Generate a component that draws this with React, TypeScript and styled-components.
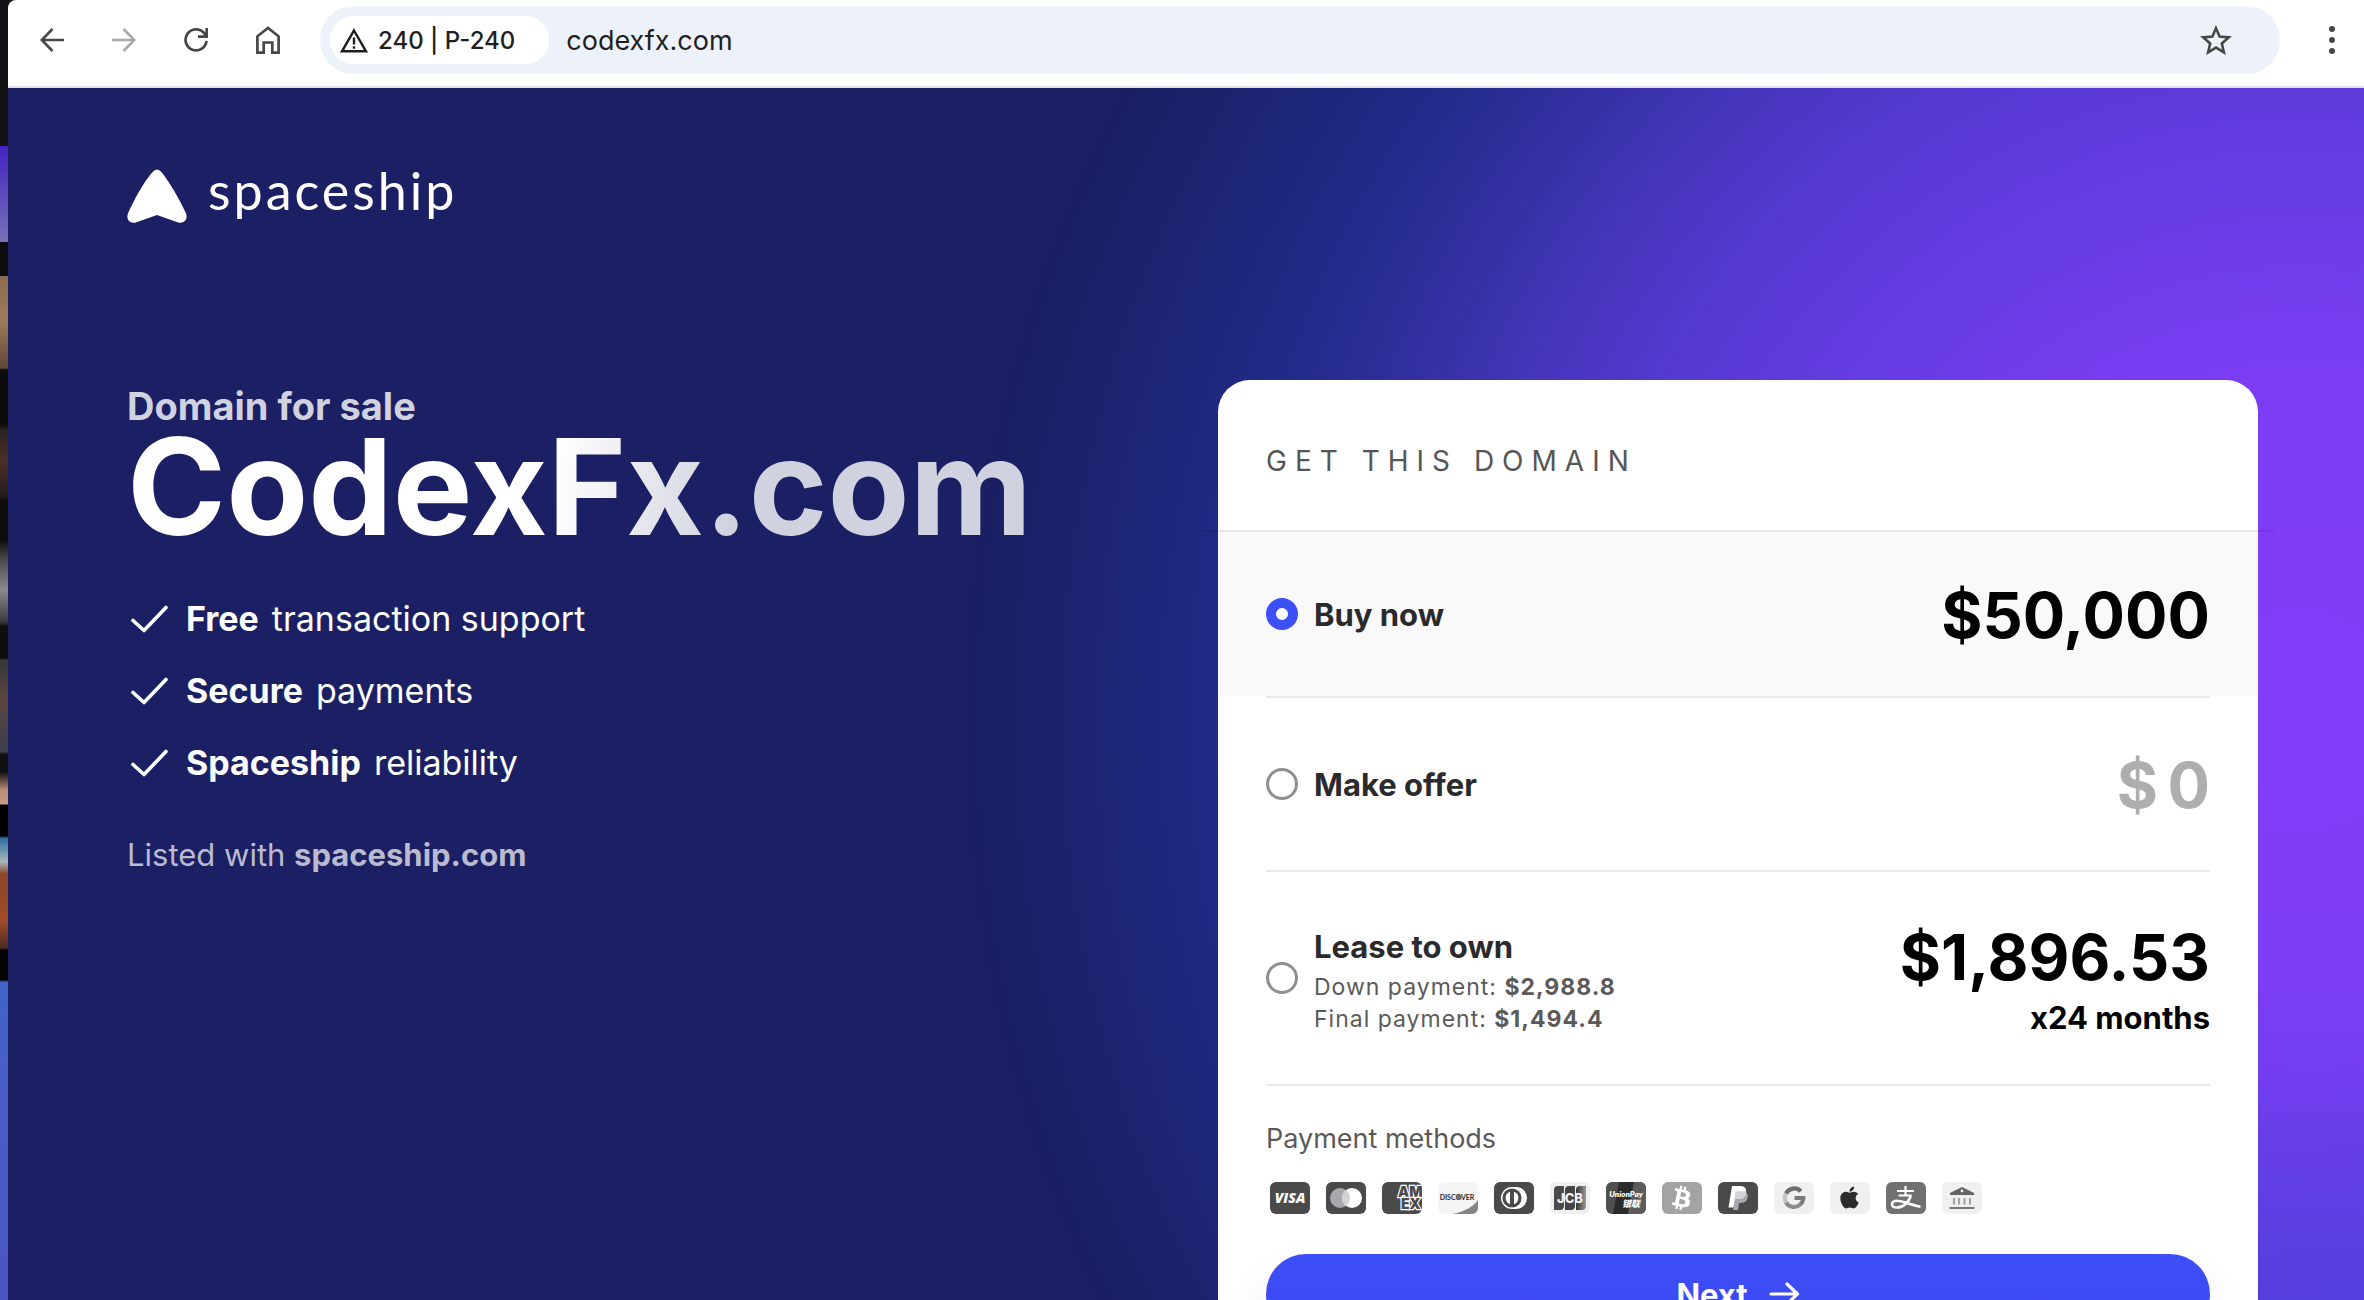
import React, { useState } from "react";
import styled, { createGlobalStyle } from "styled-components";
import { FaApple, FaBtc } from "react-icons/fa";

const GlobalStyle = createGlobalStyle`
  *, *::before, *::after { box-sizing: border-box; }
  body {
    margin: 0;
    font-family: Inter, "Liberation Sans", "Noto Sans CJK SC", sans-serif;
    -webkit-font-smoothing: antialiased;
  }
  button, input { font: inherit; }
`;

const Desktop = styled.div`
  display: grid;
  grid-template-columns: 8px minmax(0, 1fr);
  height: 100vh;
  overflow: hidden;
  background: #101010;
`;

const Backdrop = styled.aside`
  background: linear-gradient(
    180deg,
    #121214 0 146px, #4522c4 146px, #7672b6 242px,
    #0d0d0d 242px 276px, #8a6a4e 276px, #a07a5c 320px, #5f4636 368px,
    #0c0c0c 370px 424px, #2a211f 430px, #4a3026 460px, #251c1a 496px,
    #0d0d0d 500px 540px, #4a4a4c 560px, #8b8b8d 590px, #3a3a3c 622px,
    #0e0e0e 626px 658px, #353638 660px, #5a4640 700px, #3a3f4c 752px,
    #101010 754px 772px, #b98d76 790px, #c99c84 804px,
    #000000 805px 836px, #2b6f9f 838px, #a8b6b8 862px, #8c4526 874px, #a24c27 920px, #4c2c22 948px,
    #050505 950px 980px, #3f63c4 982px, #4a5cc6 1100px, #4a56c0 1300px
  );
`;

const BrowserWindow = styled.div`
  display: flex;
  flex-direction: column;
  min-width: 0;
  min-height: 0;
  border-top-left-radius: 8px;
  overflow: hidden;
`;

const Toolbar = styled.header`
  flex: none;
  display: flex;
  align-items: center;
  gap: 28px;
  padding: 6px 8px 12px 20px;
  background: #ffffff;
  border-bottom: 2px solid #dfe2e0;
  color: #474747;
`;

const NavButtons = styled.nav`
  display: flex;
  gap: 24px;
`;

const IconButton = styled.button<{ $muted?: boolean }>`
  display: grid;
  place-items: center;
  width: 48px;
  height: 48px;
  padding: 0;
  border: 0;
  background: none;
  color: ${(p) => (p.$muted ? "#a9a9a9" : "#474747")};
`;

const AddressBar = styled.div`
  flex: 1;
  display: flex;
  align-items: center;
  gap: 17px;
  height: 68px;
  padding: 0 40px 0 10px;
  border-radius: 34px;
  background: #edf2fa;
`;

const SiteChip = styled.button`
  display: flex;
  align-items: center;
  gap: 10px;
  height: 48px;
  padding: 0 34px 0 10px;
  border: 0;
  border-radius: 24px;
  background: #ffffff;
  color: #1f1f1f;
  font-size: 24px;
  font-weight: 500;
  white-space: nowrap;
`;

const UrlInput = styled.input`
  flex: 1;
  min-width: 0;
  padding: 0;
  border: 0;
  outline: 0;
  background: none;
  color: #1f1f1f;
  font-size: 27px;
`;

const Page = styled.main`
  flex: 1;
  min-height: 0;
  overflow: hidden;
  padding: 81px 106px 0 119px;
  background:
    radial-gradient(ellipse 800px 420px at 100% 108%, rgba(62, 66, 220, 0.55), rgba(62, 66, 220, 0)),
    radial-gradient(
      circle 1340px at calc(100% - 64px) 632px,
      #833df9 0%,
      #7a3df2 26%,
      #683ce5 39%,
      #5739d3 52%,
      #4636bc 62%,
      #222b8a 79%,
      #192063 98%,
      #1b1f63 100%
    );
`;

const BrandLink = styled.a`
  display: flex;
  align-items: flex-start;
  gap: 21px;
  width: max-content;
  height: 56px;
  color: #ffffff;
  text-decoration: none;
`;

const BrandName = styled.span`
  font-family: Lato, "Open Sans", sans-serif;
  font-size: 52px;
  font-weight: 400;
  line-height: 42px;
  letter-spacing: 3px;
`;

const Hero = styled.div`
  display: grid;
  grid-template-columns: repeat(2, minmax(0, 1fr));
  gap: 51px;
  align-items: start;
  margin-top: 155px;
`;

const Pitch = styled.section`
  padding-top: 2px;
  color: #ffffff;
`;

const Eyebrow = styled.p`
  margin: 0;
  color: #d1d2e0;
  font-size: 38px;
  font-weight: 700;
  line-height: 48px;
`;

const DomainName = styled.h1`
  width: max-content;
  margin: 0;
  background: linear-gradient(95deg, #ffffff 47%, #d0d2df 67%);
  background-clip: text;
  -webkit-background-clip: text;
  color: transparent;
  font-size: 134px;
  font-weight: 700;
  line-height: 112px;
`;

const Benefits = styled.ul`
  display: flex;
  flex-direction: column;
  gap: 32px;
  margin: 57px 0 0;
  padding: 0;
  list-style: none;
`;

const Benefit = styled.li`
  display: flex;
  align-items: center;
  gap: 13px;
  font-size: 34px;
  line-height: 40px;
  svg { margin: 0 3px; }
`;

const Strong = styled.strong`
  font-weight: 700;
`;

const Listing = styled.p`
  margin: 52px 0 0;
  color: #babbd0;
  font-size: 31px;
  line-height: 40px;
`;

const ListingLink = styled.a`
  color: inherit;
  font-weight: 700;
  text-decoration: none;
`;

const Card = styled.form`
  border-radius: 32px;
  background: #ffffff;
  color: #000000;
`;

const CardTitle = styled.h2`
  margin: 0;
  padding: 64px 48px 52px;
  color: #555555;
  font-size: 28px;
  font-weight: 400;
  line-height: 34px;
  letter-spacing: 8px;
  text-transform: uppercase;
`;

const Rule = styled.hr<{ $inset?: boolean }>`
  height: 2px;
  margin: ${(p) => (p.$inset ? "0 48px" : "0 -16px")};
  border: 0;
  background: rgba(0, 0, 0, 0.09);
`;

const Option = styled.div<{ $selected: boolean; $pad: number }>`
  display: flex;
  align-items: center;
  justify-content: space-between;
  padding: ${(p) => p.$pad}px 48px;
  background: ${(p) => (p.$selected ? "#f9f9f9" : "#ffffff")};
`;

const Choice = styled.label`
  display: flex;
  align-items: center;
  gap: 16px;
  color: #2a2a2c;
`;

const Radio = styled.input`
  appearance: none;
  flex: none;
  width: 32px;
  height: 32px;
  margin: 0;
  border: 3px solid #8f8f8f;
  border-radius: 50%;
  background: #ffffff;
  &:checked { border: 10px solid #3d4ff7; }
`;

const ChoiceText = styled.span`
  display: flex;
  flex-direction: column;
`;

const ChoiceName = styled.span`
  padding-top: 2px;
  font-size: 31px;
  font-weight: 700;
  line-height: 48px;
`;

const Detail = styled.span`
  color: #5a5a5a;
  font-size: 23px;
  line-height: 32px;
  letter-spacing: 1px;
`;

const PriceBlock = styled.div`
  display: flex;
  flex-direction: column;
  align-items: flex-end;
`;

const Price = styled.span`
  padding-top: 2px;
  font-size: 63px;
  font-weight: 700;
  line-height: 78px;
`;

const Term = styled.span`
  font-size: 31px;
  font-weight: 700;
  line-height: 44px;
`;

const OfferField = styled.label`
  display: flex;
  align-items: center;
  gap: 8px;
  padding-top: 2px;
  color: #aeaeae;
  font-size: 63px;
  font-weight: 700;
  line-height: 78px;
`;

const OfferInput = styled.input`
  width: 44px;
  height: 78px;
  padding: 0;
  border: 0;
  outline: 0;
  background: none;
  color: #000000;
  text-align: right;
  &::placeholder { color: #aeaeae; opacity: 1; }
`;

const Checkout = styled.div`
  padding: 36px 48px 48px;
`;

const MethodsTitle = styled.h3`
  margin: 0;
  color: #5a5a5a;
  font-size: 27px;
  font-weight: 400;
  line-height: 34px;
`;

const Methods = styled.ul`
  display: flex;
  flex-wrap: wrap;
  gap: 16px;
  margin: 26px 4px 40px;
  padding: 0;
  list-style: none;
`;

const Method = styled.li<{ $bg: string }>`
  display: grid;
  width: 40px;
  height: 32px;
  border-radius: 6px;
  overflow: hidden;
  background: ${(p) => p.$bg};
`;

const NextButton = styled.button`
  display: flex;
  align-items: center;
  justify-content: center;
  gap: 20px;
  width: 100%;
  height: 80px;
  border: 0;
  border-radius: 40px;
  background: linear-gradient(180deg, #3d4ff7, #3c46f0);
  box-shadow: 0 24px 48px rgba(0, 0, 0, 0.08);
  color: #ffffff;
  font-size: 31px;
  font-weight: 700;
`;

const Art = ({ children }: { children: React.ReactNode }) => (
  <svg width="40" height="32" viewBox="0 0 40 32" aria-hidden="true">{children}</svg>
);

const methods: { name: string; bg: string; art: React.ReactNode }[] = [
  {
    name: "Visa", bg: "#4a4a4a",
    art: <text x="20" y="21" fill="#fff" fontSize="14" fontWeight="800" fontStyle="italic" textAnchor="middle" fontFamily="Open Sans, sans-serif">VISA</text>,
  },
  {
    name: "Mastercard", bg: "#4a4a4a",
    art: <>
      <circle cx="14" cy="16" r="10" fill="#a7a7ac" />
      <circle cx="26" cy="16" r="10" fill="#fff" />
      <path d="M20 8a10 10 0 0 1 0 16a10 10 0 0 1 0-16z" fill="#d2d2d4" />
    </>,
  },
  {
    name: "American Express", bg: "#4a4a4a",
    art: <g fill="#4a4a4a" stroke="#fff" strokeWidth="2.4" paintOrder="stroke" fontSize="14" fontWeight="900" fontFamily="Inter, sans-serif">
      <text x="16" y="15">AM</text>
      <text x="19" y="27">EX</text>
    </g>,
  },
  {
    name: "Discover", bg: "#f5f5f5",
    art: <>
      <path d="M15 32C28 29 36 24 40 18V32z" fill="#858585" />
      <text x="19" y="18" fill="#2c2c2c" fontSize="7" fontWeight="700" textAnchor="middle" fontFamily="Lato, sans-serif">DISCOVER</text>
      <circle cx="21" cy="15.5" r="2.6" fill="#6d6d6d" />
    </>,
  },
  {
    name: "Diners Club", bg: "#4a4a4a",
    art: <>
      <path d="M18 5h4a11 11 0 0 1 0 22h-4z" fill="#fff" />
      <circle cx="18" cy="16" r="11" fill="#fff" />
      <circle cx="18" cy="16" r="9.6" fill="#4a4a4a" />
      <path d="M16 9.800a6.600 6.600 0 0 0 0 12.400zM20 9.800a6.600 6.600 0 0 1 0 12.400z" fill="#fff" />
    </>,
  },
  {
    name: "JCB", bg: "#f0f0f0",
    art: <>
      <defs>
        <linearGradient id="jcb"><stop offset="0" stopColor="#333" /><stop offset="1" stopColor="#999" /></linearGradient>
      </defs>
      <path d="M4 8q0-4 4-4h6v20q0 4-4 4H4z" fill="#4a4a4a" />
      <path d="M15 8q0-4 4-4h6v20q0 4-4 4h-6z" fill="#444" />
      <path d="M26 8q0-4 4-4h6v20q0 4-4 4h-6z" fill="url(#jcb)" />
      <text x="20" y="20.500" fill="#f0f0f0" fontSize="13" fontWeight="800" textAnchor="middle" fontFamily="Inter, sans-serif">JCB</text>
    </>,
  },
  {
    name: "UnionPay", bg: "#4f4f4f",
    art: <>
      <path d="M13 0h15l-6 32H7z" fill="#2b2b2b" />
      <path d="M28 0h12v32H22z" fill="#5c5c5c" />
      <text x="20" y="15" fill="#fff" fontSize="8" fontWeight="800" fontStyle="italic" textAnchor="middle" fontFamily="Lato, sans-serif">UnionPay</text>
      <text x="25" y="24.500" fill="#fff" fontSize="9" fontWeight="900" fontStyle="italic" textAnchor="middle" fontFamily="Noto Sans CJK SC, sans-serif">银联</text>
    </>,
  },
  {
    name: "Bitcoin", bg: "#a3a3a3",
    art: <g transform="rotate(12 20 16)"><FaBtc x={8} y={4} size={24} color="#fff" /></g>,
  },
  {
    name: "PayPal", bg: "#4a4a4a",
    art: <>
      <path d="M18.500 9h8q4 2 3.200 6.500Q28.500 21 22.500 21h-1.500l-1 7h-5z" fill="#a5a8ae" />
      <path d="M14 4h8.500q6.500 0 5.500 6.500Q27 17 20.500 17H17l-1.500 8.500H10.500z" fill="#fff" />
      <path d="M17.500 9.200h10.600q-.1 7.800-7.600 7.800H16.300z" fill="#d3d4d8" />
    </>,
  },
  {
    name: "Google Pay", bg: "#f0f0f0",
    art: <g fill="none" strokeWidth="4.200">
      <path d="M26.800 9.300A9.200 9.200 0 0 0 12 11.500" stroke="#6e6e6e" />
      <path d="M12 11.500a9.200 9.200 0 0 0 0 9" stroke="#c4c4c4" />
      <path d="M12 20.500a9.200 9.200 0 0 0 14.200 2" stroke="#8c8c8c" />
      <path d="M20.500 16h8.800a9.200 9.200 0 0 1-3.100 6.500" stroke="#7c7c7c" />
    </g>,
  },
  {
    name: "Apple Pay", bg: "#f0f0f0",
    art: <FaApple x={7} y={3} size={25} color="#2b2b2b" />,
  },
  {
    name: "Alipay", bg: "#717171",
    art: <g fill="none" stroke="#fff">
      <path d="M11 9h17M19.500 4v9M12.500 13.500h13" strokeWidth="2.200" />
      <path d="M25 13.500C23 20 17 25.500 11 25.500c-3.200 0-5-1.400-5-3.300 0-2 2-3.500 4.800-3.500 6 0 13.700 4 23.700 6" strokeWidth="2.600" />
    </g>,
  },
  {
    name: "Bank transfer", bg: "#f0f0f0",
    art: <>
      <path d="M20 5 32 11v2H8v-2z" fill="#666" />
      <circle cx="20" cy="9" r="1.400" fill="#f0f0f0" />
      <path d="M12 16v6.500M17 16v6.500M22.500 16v6.500M28 16v6.500" stroke="#999" strokeWidth="1.800" />
      <path d="M7.500 26h25" stroke="#777" strokeWidth="2" />
    </>,
  },
];

const benefits = [
  ["Free", "transaction support"],
  ["Secure", "payments"],
  ["Spaceship", "reliability"],
];

type Choices = "buy" | "offer" | "lease";

export default function App() {
  const [choice, setChoice] = useState<Choices>("buy");
  const radio = (value: Choices) => (
    <Radio type="radio" name="purchase" value={value} checked={choice === value} onChange={() => setChoice(value)} />
  );

  return (
    <>
      <GlobalStyle />
      <Desktop>
        <Backdrop />
        <BrowserWindow>
          <Toolbar>
            <NavButtons>
              <IconButton type="button" aria-label="Back">
                <svg width="24" height="24" viewBox="0 0 24 24" fill="none" stroke="currentColor" strokeWidth="2.600"><path d="M24 12H2M12.500 1 1.700 12l10.800 11" /></svg>
              </IconButton>
              <IconButton type="button" aria-label="Forward" $muted>
                <svg width="24" height="24" viewBox="0 0 24 24" fill="none" stroke="currentColor" strokeWidth="2.600"><path d="M0 12h22M11.500 1l10.800 11-10.800 11" /></svg>
              </IconButton>
              <IconButton type="button" aria-label="Reload">
                <svg width="24" height="24" viewBox="0 0 24 24" fill="none" stroke="currentColor" strokeWidth="2.700"><path d="M22.500 13A10.500 10.500 0 1 1 20 5l2.500 3M22.700 0v8.700H14" /></svg>
              </IconButton>
              <IconButton type="button" aria-label="Home">
                <svg width="24" height="28" viewBox="0 0 24 28" fill="none" stroke="currentColor" strokeWidth="2.700"><path d="M1.400 26.600V10.300L12 2l10.600 8.300v16.300h-6.300V16.500H7.700v10.100z" /></svg>
              </IconButton>
            </NavButtons>
            <AddressBar>
              <SiteChip type="button">
                <svg width="28" height="25" viewBox="0 0 28 25" fill="none" stroke="currentColor" strokeWidth="2.400"><path d="M14 2.500 26 23.300H2zM14 9.500v7M14 18.200v2.600" /></svg>
                240 | P-240
              </SiteChip>
              <UrlInput aria-label="Address" defaultValue="codexfx.com" />
              <IconButton type="button" aria-label="Bookmark">
                <svg width="32" height="30" viewBox="0 0 32 30" fill="none" stroke="currentColor" strokeWidth="2.600"><path d="m16 3.200 3.600 8.400 9.200.8-7 6 2.100 9-7.900-4.800-7.900 4.800 2.100-9-7-6 9.200-.8z" /></svg>
              </IconButton>
            </AddressBar>
            <IconButton type="button" aria-label="Menu">
              <svg width="6" height="28" viewBox="0 0 6 28" fill="currentColor"><circle cx="3" cy="3" r="3" /><circle cx="3" cy="14" r="3" /><circle cx="3" cy="25" r="3" /></svg>
            </IconButton>
          </Toolbar>

          <Page>
            <BrandLink href="#">
              <svg width="60" height="54" viewBox="0 0 60 54" fill="#fff" aria-hidden="true">
                <path d="M24.500 4.200Q30-3.200 35.500 4.200 48 21 58.600 43.500C61.800 50 57 55.500 50.500 53.200L30 46 9.500 53.200C3 55.500-1.800 50 1.400 43.500 12 21 19 11 24.500 4.200z" />
              </svg>
              <BrandName>spaceship</BrandName>
            </BrandLink>

            <Hero>
              <Pitch>
                <Eyebrow>Domain for sale</Eyebrow>
                <DomainName>CodexFx.com</DomainName>
                <Benefits>
                  {benefits.map(([lead, rest]) => (
                    <Benefit key={lead}>
                      <svg width="40" height="28" viewBox="0 0 40 28" fill="none" stroke="#fff" strokeWidth="3.600" strokeLinecap="round" strokeLinejoin="round"><path d="m3 15.500 11 10L36 2.500" /></svg>
                      <Strong>{lead}</Strong>
                      <span>{rest}</span>
                    </Benefit>
                  ))}
                </Benefits>
                <Listing>Listed with <ListingLink href="#">spaceship.com</ListingLink></Listing>
              </Pitch>

              <Card onSubmit={(e) => e.preventDefault()}>
                <CardTitle>Get this domain</CardTitle>
                <Rule />
                <Option $selected={choice === "buy"} $pad={42}>
                  <Choice>
                    {radio("buy")}
                    <ChoiceName>Buy now</ChoiceName>
                  </Choice>
                  <Price>$50,000</Price>
                </Option>
                <Rule $inset />
                <Option $selected={choice === "offer"} $pad={46}>
                  <Choice>
                    {radio("offer")}
                    <ChoiceName>Make offer</ChoiceName>
                  </Choice>
                  <OfferField>
                    $
                    <OfferInput aria-label="Your offer" placeholder="0" inputMode="numeric" />
                  </OfferField>
                </Option>
                <Rule $inset />
                <Option $selected={choice === "lease"} $pad={44}>
                  <Choice>
                    {radio("lease")}
                    <ChoiceText>
                      <ChoiceName>Lease to own</ChoiceName>
                      <Detail>Down payment: <Strong>$2,988.8</Strong></Detail>
                      <Detail>Final payment: <Strong>$1,494.4</Strong></Detail>
                    </ChoiceText>
                  </Choice>
                  <PriceBlock>
                    <Price>$1,896.53</Price>
                    <Term>x24 months</Term>
                  </PriceBlock>
                </Option>
                <Rule $inset />
                <Checkout>
                  <MethodsTitle>Payment methods</MethodsTitle>
                  <Methods>
                    {methods.map((m) => (
                      <Method key={m.name} $bg={m.bg} aria-label={m.name}><Art>{m.art}</Art></Method>
                    ))}
                  </Methods>
                  <NextButton type="submit">
                    Next
                    <svg width="32" height="24" viewBox="0 0 32 24" fill="none" stroke="currentColor" strokeWidth="3.200" strokeLinecap="round" strokeLinejoin="round"><path d="M3 12h26M19 2l10.500 10L19 22" /></svg>
                  </NextButton>
                </Checkout>
              </Card>
            </Hero>
          </Page>
        </BrowserWindow>
      </Desktop>
    </>
  );
}
